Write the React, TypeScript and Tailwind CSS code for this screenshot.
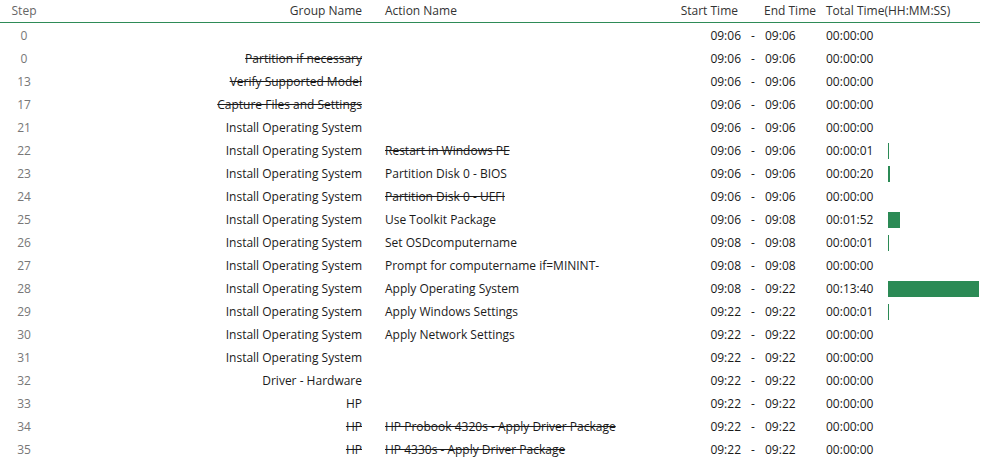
const rows: [string, string, boolean, string, boolean, string, string, string, number][] = [
  ["0", "", false, "", false, "09:06", "09:06", "00:00:00", 0],
  ["0", "Partition if necessary", true, "", false, "09:06", "09:06", "00:00:00", 0],
  ["13", "Verify Supported Model", true, "", false, "09:06", "09:06", "00:00:00", 0],
  ["17", "Capture Files and Settings", true, "", false, "09:06", "09:06", "00:00:00", 0],
  ["21", "Install Operating System", false, "", false, "09:06", "09:06", "00:00:00", 0],
  ["22", "Install Operating System", false, "Restart in Windows PE", true, "09:06", "09:06", "00:00:01", 1],
  ["23", "Install Operating System", false, "Partition Disk 0 - BIOS", false, "09:06", "09:06", "00:00:20", 2],
  ["24", "Install Operating System", false, "Partition Disk 0 - UEFI", true, "09:06", "09:06", "00:00:00", 0],
  ["25", "Install Operating System", false, "Use Toolkit Package", false, "09:06", "09:08", "00:01:52", 12],
  ["26", "Install Operating System", false, "Set OSDcomputername", false, "09:08", "09:08", "00:00:01", 1],
  ["27", "Install Operating System", false, "Prompt for computername if=MININT-", false, "09:08", "09:08", "00:00:00", 0],
  ["28", "Install Operating System", false, "Apply Operating System", false, "09:08", "09:22", "00:13:40", 91],
  ["29", "Install Operating System", false, "Apply Windows Settings", false, "09:22", "09:22", "00:00:01", 1],
  ["30", "Install Operating System", false, "Apply Network Settings", false, "09:22", "09:22", "00:00:00", 0],
  ["31", "Install Operating System", false, "", false, "09:22", "09:22", "00:00:00", 0],
  ["32", "Driver - Hardware", false, "", false, "09:22", "09:22", "00:00:00", 0],
  ["33", "HP", false, "", false, "09:22", "09:22", "00:00:00", 0],
  ["34", "HP", true, "HP Probook 4320s - Apply Driver Package", true, "09:22", "09:22", "00:00:00", 0],
  ["35", "HP", true, "HP 4330s - Apply Driver Package", true, "09:22", "09:22", "00:00:00", 0],
];

export default function App() {
  return (
    <div className="w-[1007px] h-[464px] bg-white overflow-hidden text-[12px] text-[#1a1a1a]" style={{ fontFamily: '"Segoe UI", "Open Sans", "Noto Sans", sans-serif' }}>
      <div className="flex items-center h-[23px] w-[980px] border-b border-[#2e8b57] text-[#333]">
        <div className="w-[48px] text-center text-[#666]">Step</div>
        <div className="w-[314px] text-right">Group Name</div>
        <div className="w-[317px] pl-[23px]">Action Name</div>
        <div className="w-[62px] text-right pr-[3px]">Start Time</div>
        <div className="w-[23px]"></div>
        <div className="w-[62px]">End Time</div>
        <div className="whitespace-nowrap">Total Time(HH:MM:SS)</div>
      </div>
      <div className="pt-[1px]">
        {rows.map((r, i) => (
          <div key={i} className="flex items-center h-[23px] whitespace-nowrap">
            <div className="w-[48px] text-center text-[#777]">{r[0]}</div>
            <div className={`w-[314px] text-right ${r[2] ? "line-through" : ""}`}>{r[1]}</div>
            <div className={`w-[317px] pl-[23px] ${r[4] ? "line-through" : ""}`}>{r[3]}</div>
            <div className="w-[62px] text-right">{r[5]}</div>
            <div className="w-[24px] text-center">-</div>
            <div className="w-[61px]">{r[6]}</div>
            <div className="w-[62px]">{r[7]}</div>
            <div className="h-[17px] flex items-center">
              {r[8] > 0 && <div className="h-[16px] bg-[#2b8a55]" style={{ width: r[8] + "px" }} />}
            </div>
          </div>
        ))}
      </div>
    </div>
  );
}
